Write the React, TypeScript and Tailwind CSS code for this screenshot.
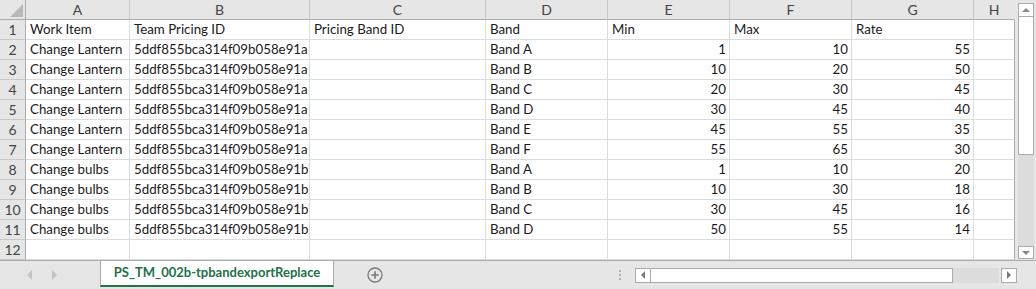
import React from "react";

const cols = ["A", "B", "C", "D", "E", "F", "G", "H"];

type Row = [string, string, string, string, number | null, number | null, number | null];

const rows: Row[] = [
  ["Work Item", "Team Pricing ID", "Pricing Band ID", "Band", null, null, null],
  ["Change Lantern", "5ddf855bca314f09b058e91a", "", "Band A", 1, 10, 55],
  ["Change Lantern", "5ddf855bca314f09b058e91a", "", "Band B", 10, 20, 50],
  ["Change Lantern", "5ddf855bca314f09b058e91a", "", "Band C", 20, 30, 45],
  ["Change Lantern", "5ddf855bca314f09b058e91a", "", "Band D", 30, 45, 40],
  ["Change Lantern", "5ddf855bca314f09b058e91a", "", "Band E", 45, 55, 35],
  ["Change Lantern", "5ddf855bca314f09b058e91a", "", "Band F", 55, 65, 30],
  ["Change bulbs", "5ddf855bca314f09b058e91b", "", "Band A", 1, 10, 20],
  ["Change bulbs", "5ddf855bca314f09b058e91b", "", "Band B", 10, 30, 18],
  ["Change bulbs", "5ddf855bca314f09b058e91b", "", "Band C", 30, 45, 16],
  ["Change bulbs", "5ddf855bca314f09b058e91b", "", "Band D", 50, 55, 14],
];

const headerLabels = ["Min", "Max", "Rate"];

function TextCell({ children }: { children?: React.ReactNode }) {
  return (
    <div className="flex h-5 items-center overflow-hidden whitespace-nowrap border-r border-b border-[#dadcdd] bg-white pl-[4px]">
      {children}
    </div>
  );
}

function NumCell({ children }: { children?: React.ReactNode }) {
  return (
    <div className="flex h-5 items-center justify-end overflow-hidden whitespace-nowrap border-r border-b border-[#dadcdd] bg-white pr-[3px]">
      {children}
    </div>
  );
}

function RowHead({ n }: { n: number }) {
  return (
    <div className="flex h-5 items-center justify-center border-r border-b border-r-[#ababab] border-b-[#c8c8c8] bg-[#e6e6e6] text-[14px] text-[#444]">
      {n}
    </div>
  );
}

function VScroll() {
  return (
    <div className="flex h-[260px] w-[22px] flex-col bg-[#e6e6e6] pl-[3px] pt-[3px] pr-[3px] pb-[1px]">
      <div className="flex h-[14px] w-[16px] items-center justify-center border border-[#ababab] bg-white">
        <div className="h-0 w-0 border-x-[4px] border-b-[4px] border-x-transparent border-b-[#8a8a8a]" />
      </div>
      <div className="flex flex-1 flex-col bg-[#dcdcdc]">
        <div className="h-[138px] w-[16px] border border-t-0 border-[#ababab] bg-white" />
      </div>
      <div className="flex h-[13px] w-[16px] items-center justify-center border border-[#ababab] bg-white">
        <div className="h-0 w-0 border-x-[4px] border-t-[4px] border-x-transparent border-t-[#8a8a8a]" />
      </div>
    </div>
  );
}

function SheetBar() {
  return (
    <div className="flex h-[29px] w-[1036px] items-start border-t border-[#ababab] bg-[#e6e6e6]">
      <div className="flex h-[28px] w-[100px] items-center gap-[20px] pl-[27px]">
        <div className="h-0 w-0 border-y-[5px] border-r-[5px] border-y-transparent border-r-[#c4c4c4]" />
        <div className="h-0 w-0 border-y-[5px] border-l-[5px] border-y-transparent border-l-[#c4c4c4]" />
      </div>
      <div className="flex h-[26px] w-[234px] items-center justify-center border-x border-[#ababab] border-b-[2px] border-b-[#217346] bg-white text-[13px] font-bold text-[#217346]">
        PS_TM_002b-tpbandexportReplace
      </div>
      <div className="flex h-[28px] w-[82px] items-center justify-center">
        <svg width="16" height="16" viewBox="0 0 16 16">
          <circle cx="8" cy="8" r="7" fill="none" stroke="#7a7a7a" strokeWidth="1.3" />
          <path d="M8 4.2v7.6M4.2 8h7.6" stroke="#7a7a7a" strokeWidth="1.6" />
        </svg>
      </div>
      <div className="flex-1" />
      <div className="flex h-[28px] items-center gap-[14px] pr-[19px]">
        <div className="flex flex-col gap-[2px]">
          <div className="h-[2px] w-[2px] bg-[#b0b0b0]" />
          <div className="h-[2px] w-[2px] bg-[#b0b0b0]" />
          <div className="h-[2px] w-[2px] bg-[#b0b0b0]" />
        </div>
        <div className="flex h-[15px] items-stretch">
          <div className="flex w-[16px] items-center justify-center border border-[#ababab] bg-white">
            <div className="h-0 w-0 border-y-[4px] border-r-[4px] border-y-transparent border-r-[#7a7a7a]" />
          </div>
          <div className="w-[302px] border-y border-r border-[#ababab] bg-white" />
          <div className="w-[46px] bg-[#dcdcdc]" />
          <div className="ml-[2px] flex w-[16px] items-center justify-center border border-[#ababab] bg-white">
            <div className="h-0 w-0 border-y-[4px] border-l-[4px] border-y-transparent border-l-[#7a7a7a]" />
          </div>
        </div>
      </div>
    </div>
  );
}

export default function App() {
  return (
    <div
      className="h-[289px] w-[1036px] overflow-hidden bg-[#e6e6e6] text-[13.3px] text-[#1a1a1a]"
      style={{ fontFamily: "Lato, 'Open Sans', sans-serif" }}
    >
      <div className="flex">
        <div className="grid w-[1015px] grid-cols-[26px_104px_180px_176px_122px_122px_122px_122px_41px]">
          <div className="relative h-5 border-r border-b border-[#ababab] bg-[#e6e6e6]">
            <svg className="absolute right-[2px] bottom-[2px]" width="13" height="13" viewBox="0 0 13 13">
              <path d="M13 0V13H0Z" fill="#b8b8b8" />
            </svg>
          </div>
          {cols.map((c, i) => (
            <div
              key={c}
              className={`flex h-5 items-center justify-center border-b border-r border-b-[#ababab] bg-[#e6e6e6] text-[14px] text-[#444] ${
                i === cols.length - 1 ? "border-r-transparent" : "border-r-[#c8c8c8]"
              }`}
            >
              {c}
            </div>
          ))}
          {rows.map((r, i) => (
            <React.Fragment key={i}>
              <RowHead n={i + 1} />
              <TextCell>{r[0]}</TextCell>
              <TextCell>{r[1]}</TextCell>
              <TextCell>{r[2]}</TextCell>
              <TextCell>{r[3]}</TextCell>
              {i === 0 ? (
                <>
                  <TextCell>{headerLabels[0]}</TextCell>
                  <TextCell>{headerLabels[1]}</TextCell>
                  <TextCell>{headerLabels[2]}</TextCell>
                </>
              ) : (
                <>
                  <NumCell>{r[4]}</NumCell>
                  <NumCell>{r[5]}</NumCell>
                  <NumCell>{r[6]}</NumCell>
                </>
              )}
              <div className="h-5 border-r border-b border-r-[#ababab] border-b-[#dadcdd] bg-white" />
            </React.Fragment>
          ))}
          <RowHead n={12} />
          {cols.map((c, i) => (
            <div
              key={c}
              className={`h-5 border-r border-b border-b-[#dadcdd] bg-white ${
                i === cols.length - 1 ? "border-r-[#ababab]" : "border-r-[#dadcdd]"
              }`}
            />
          ))}
        </div>
        <VScroll />
      </div>
      <SheetBar />
    </div>
  );
}
